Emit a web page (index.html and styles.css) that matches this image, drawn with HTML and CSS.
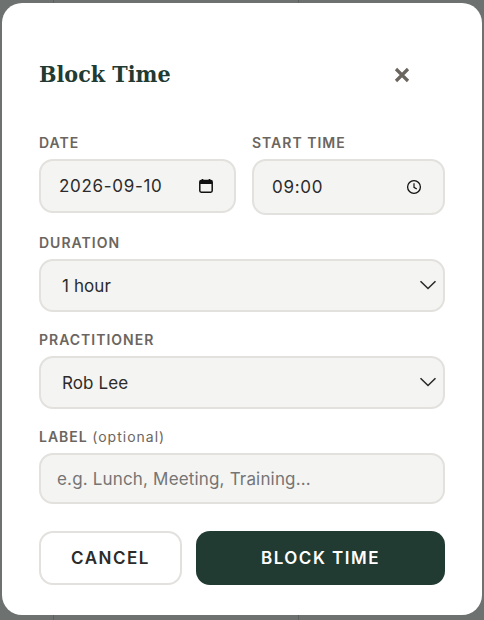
FILE: index.html
```html
<!DOCTYPE html>
<html lang="en">
<head>
    <meta charset="UTF-8">
    <meta name="viewport" content="width=device-width, initial-scale=1.0">
    <title>Block Time</title>
    <link rel="stylesheet" href="styles.css">
</head>
<body>
    <div class="modal">
        <div class="modal-header">
            <h2>Block Time</h2>
            <button class="close-btn" type="button" aria-label="Close">
                <svg width="16" height="16" viewBox="0 0 16 16"><path d="M2 2L14 14M14 2L2 14" stroke="#6b6560" stroke-width="3.2" fill="none"/></svg>
            </button>
        </div>
        <form class="block-form">
            <div class="form-row">
                <div class="form-item">
                    <label for="date">Date</label>
                    <div class="field field-date">
                        <input type="text" id="date" value="2026-09-10">
                        <svg width="16" height="16" viewBox="0 0 16 16"><path d="M4.5 1v2M11.5 1v2" stroke="#111" stroke-width="1.6"/><rect x="1.8" y="2.6" width="12.4" height="11.6" rx="1.4" fill="none" stroke="#111" stroke-width="1.5"/><path d="M2 3h12v3H2z" fill="#111"/></svg>
                    </div>
                </div>
                <div class="form-item">
                    <label for="start">Start Time</label>
                    <div class="field field-time">
                        <input type="text" id="start" value="09:00">
                        <svg width="16" height="16" viewBox="0 0 16 16"><circle cx="8" cy="8" r="6.4" fill="none" stroke="#111" stroke-width="1.3"/><path d="M8 4.2V8.3L10.8 10" fill="none" stroke="#111" stroke-width="1.2"/></svg>
                    </div>
                </div>
            </div>
            <div class="form-item">
                <label for="duration">Duration</label>
                <div class="field field-select">
                    <select id="duration">
                        <option>1 hour</option>
                    </select>
                    <svg class="chevron" width="18" height="10" viewBox="0 0 18 10"><path d="M1.5 1.2L9 8.5L16.5 1.2" fill="none" stroke="#2b2b2b" stroke-width="1.6"/></svg>
                </div>
            </div>
            <div class="form-item">
                <label for="practitioner">Practitioner</label>
                <div class="field field-select">
                    <select id="practitioner">
                        <option>Rob Lee</option>
                    </select>
                    <svg class="chevron" width="18" height="10" viewBox="0 0 18 10"><path d="M1.5 1.2L9 8.5L16.5 1.2" fill="none" stroke="#2b2b2b" stroke-width="1.6"/></svg>
                </div>
            </div>
            <div class="form-item">
                <label for="label">Label <span class="optional">(optional)</span></label>
                <div class="field field-label">
                    <input type="text" id="label" placeholder="e.g. Lunch, Meeting, Training...">
                </div>
            </div>
            <div class="form-actions">
                <button type="button" class="cancel-btn">Cancel</button>
                <button type="submit" class="submit-btn">Block Time</button>
            </div>
        </form>
    </div>
</body>
</html>
```

FILE: styles.css
```css
* {
    box-sizing: border-box;
}
body {
    margin: 0;
    height: 620px;
    padding: 3px 2px 5px;
    overflow: hidden;
    background-color: #6d7170;
    background-image:
        linear-gradient(#5c605f, #5c605f),
        linear-gradient(#5c605f, #5c605f);
    background-size: 1px 100%, 1px 100%;
    background-position: 53px 0, 298px 0;
    background-repeat: no-repeat;
    font-family: Inter, "Liberation Sans", sans-serif;
}
.modal {
    height: 612px;
    padding: 0 37px;
    background-color: #fff;
    border-radius: 20px;
}
.modal-header {
    display: flex;
    justify-content: space-between;
    align-items: center;
    height: 128px;
    padding-top: 12px;
}
.modal-header h2 {
    margin: 0;
    font-family: "DejaVu Serif Condensed", "DejaVu Serif", serif;
    font-size: 23px;
    font-weight: 700;
    color: #213a32;
}
.close-btn {
    display: flex;
    margin-top: 4px;
    margin-right: 35px;
    padding: 0;
    background: none;
    border: none;
}
.form-row {
    display: grid;
    grid-template-columns: 197px 193px;
    gap: 16px;
    align-items: start;
    margin-bottom: 16px;
}
.form-item {
    margin-bottom: 16px;
}
.form-row .form-item {
    margin-bottom: 0;
}
.form-item label {
    display: block;
    height: 24px;
    margin-bottom: 4px;
    font-size: 14px;
    line-height: 23px;
    font-weight: 600;
    letter-spacing: 1px;
    text-transform: uppercase;
    color: #6b6560;
}
.form-item .optional {
    font-weight: 400;
    letter-spacing: 1px;
    text-transform: none;
}
.field {
    position: relative;
    display: flex;
    align-items: center;
    background-color: #f4f4f2;
    border: 2px solid #e2e1de;
    border-radius: 14px;
}
.field input,
.field select {
    flex: 1;
    min-width: 0;
    padding: 0;
    font-family: inherit;
    font-size: 17px;
    color: #2b2b2b;
    background: none;
    border: none;
    outline: none;
    appearance: none;
}
.field-date {
    height: 54px;
    padding: 0 20px 0 18px;
}
.field-date input,
.field-time input {
    letter-spacing: 0.7px;
}
.field-time {
    height: 56px;
    padding: 0 21px 0 18px;
}
.field-select {
    height: 53px;
}
.field-select select {
    height: 100%;
    padding-left: 21px;
    letter-spacing: 0.1px;
}
.chevron {
    position: absolute;
    top: 19px;
    right: 6px;
}
.field-label {
    height: 51px;
    padding: 0 16px;
}
.field-label input {
    letter-spacing: 0.17px;
}
.field-label input::placeholder {
    color: #757575;
}
.form-actions {
    display: flex;
    gap: 14px;
    margin-top: 27px;
}
.form-actions button {
    height: 54px;
    font-family: inherit;
    font-size: 17px;
    font-weight: 600;
    letter-spacing: 1.5px;
    text-transform: uppercase;
    border-radius: 14px;
}
.cancel-btn {
    width: 143px;
    color: #2b2b2b;
    background-color: #fff;
    border: 2px solid #e2e1de;
}
.submit-btn {
    flex: 1;
    color: #fff;
    background-color: #213a32;
    border: none;
}
```
